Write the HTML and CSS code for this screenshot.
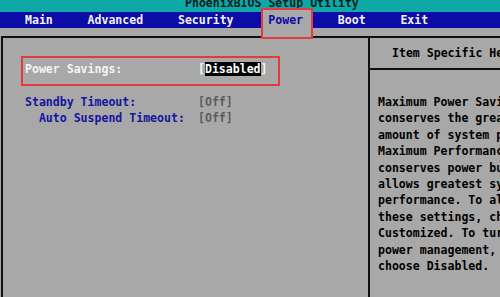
FILE: index.html
```html
<!DOCTYPE html>
<html>
<head>
<meta charset="utf-8">
<link rel="stylesheet" href="styles.css">
</head>
<body>
<header class="title"><span>PhoenixBIOS Setup Utility</span></header>
<nav class="menu"><span>Main</span><span>Advanced</span><span>Security</span><span class="active">Power</span><span>Boot</span><span>Exit</span></nav>
<div class="gap"></div>
<main class="frame">
  <section class="left">
    <div class="row"></div>
    <div class="row selected"><span class="label">Power Savings:</span><span class="value">[<span class="hl">Disabled</span>]</span></div>
    <div class="row"></div>
    <div class="row item"><span class="label">Standby Timeout:</span><span class="value dim">[Off]</span></div>
    <div class="row item sub"><span class="label">Auto Suspend Timeout:</span><span class="value dim">[Off]</span></div>
  </section>
  <aside class="help">
    <div class="help-head">Item Specific Help</div>
    <div class="help-body">Maximum Power Savings
conserves the greatest
amount of system power.
Maximum Performance
conserves power but
allows greatest system
performance. To alter
these settings, choose
Customized. To turn off
power management,
choose Disabled.</div>
  </aside>
</main>
</body>
</html>
```
FILE: styles.css
```css
* { box-sizing: border-box; margin: 0; padding: 0; }
html, body { width: 500px; height: 297px; overflow: hidden; }
body {
  background: #a8a8a8;
  font-family: "DejaVu Sans Mono", "Liberation Mono", monospace;
  font-weight: bold;
  font-size: 11.55px;
  line-height: 16.4px;
  white-space: nowrap;
}
.title {
  height: 11.6px;
  background: #0ea8a6;
  color: #0a1c1c;
  overflow: hidden;
}
.title span { display: block; margin-top: -4.6px; padding-left: 185px; }
.menu {
  height: 16.4px;
  background: #0c0ca8;
  color: #f2f2f6;
  display: flex;
  gap: 34.75px;
  padding-left: 25px;
}
.menu .active { position: relative; z-index: 0; color: #0c0ca8; }
.menu .active::before {
  content: "";
  position: absolute;
  z-index: -1;
  left: -7px;
  right: -9.7px;
  top: -4.1px;
  bottom: -11px;
  background: #a8a8a8;
  border: 2px solid #e23a3f;
}
.gap { height: 7.6px; }
.frame {
  display: flex;
  height: 261px;
  margin-left: 1px;
  border-top: 2px solid #101010;
  border-left: 2px solid #101010;
}
.left { width: 365px; padding: 7.2px 0 0 22px; }
.row { height: 16.4px; display: flex; position: relative; }
.label { width: 173px; white-space: pre; }
.selected { color: #f4f4f4; }
.selected::after {
  content: "";
  position: absolute;
  left: -4px;
  top: -5.5px;
  width: 255.3px;
  height: 26px;
  border: 2px solid #e23a3f;
}
.hl { background: #000; color: #fff; }
.item { color: #1414a0; }
.sub .label { padding-left: 13.9px; }
.dim { color: #5c5c5c; }
.help { flex: 1; border-left: 2px solid #101010; color: #000; overflow: hidden; }
.help-head { padding: 7.2px 0 7.2px 22px; border-bottom: 2px solid #101010; }
.help-body { padding: 23.6px 0 0 8px; white-space: pre; }
```
